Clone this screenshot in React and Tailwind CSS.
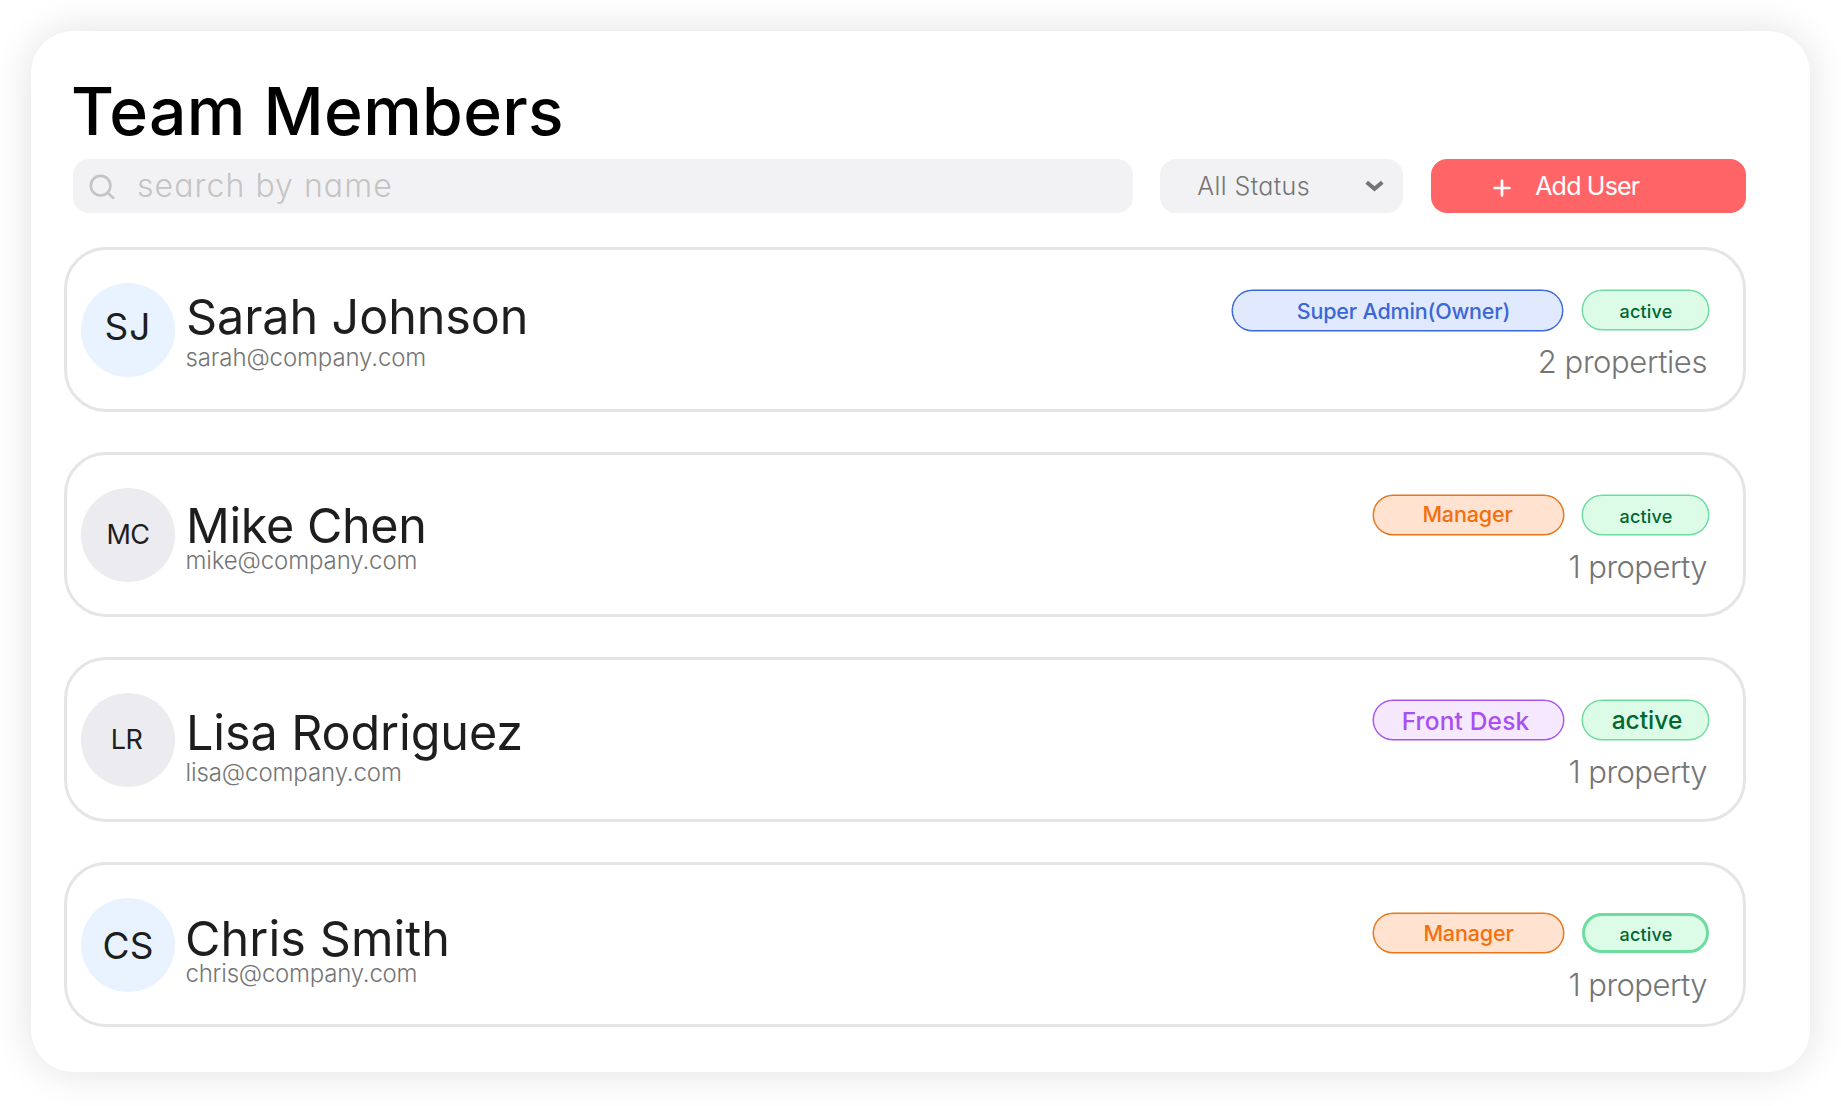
const managerPill = "w-[191px] h-[40px] border-[#e8751a] shadow-[0_0_0_0.5px_#e8751a] bg-[#ffe2cf] text-[#f2700d] text-[21.5px] tracking-[-0.15px]";
const activePill = "border-[1px] shadow-[0_0_0_0.5px_#6ddc9f]";

const members = [
  {
    initials: "SJ", avatar: "bg-[#e9f3ff] text-[37px] tracking-[1px]", initialsBox: "-mt-[6px]",
    name: "Sarah Johnson", nameBox: "mt-[43px] tracking-[-0.1px]",
    email: "sarah@company.com", emailBox: "mt-[6px] tracking-[-0.12px]",
    role: "Super Admin(Owner)", roleBox: "mr-px w-[331px] h-[41px] border-[#3b67d6] shadow-[0_0_0_0.5px_#3b67d6] bg-[#e0e9fe] text-[#3b67d6] text-[21.5px] tracking-[-0.18px]", roleText: "translate-x-[6px] translate-y-px",
    status: activePill, statusText: "text-[18px] tracking-[0.2px] mt-[4px] ml-px",
    badges: "mt-[40px]", properties: "2 properties", propertiesText: "mt-[12px] tracking-[-0.4px]",
  },
  {
    initials: "MC", avatar: "bg-[#ebebf0] text-[27px] tracking-[-0.6px]", initialsBox: "-mt-px",
    name: "Mike Chen", nameBox: "mt-[47px] tracking-[-0.4px]",
    email: "mike@company.com", emailBox: "tracking-[-0.12px]",
    role: "Manager", roleBox: managerPill, roleText: "-translate-x-px",
    status: activePill, statusText: "text-[18px] tracking-[0.2px] mt-[4px] ml-px",
    badges: "mt-[40px]", properties: "1 property", propertiesText: "mt-[13px] tracking-[-0.55px]",
  },
  {
    initials: "LR", avatar: "bg-[#ebebf0] text-[27px] tracking-[-0.6px]", initialsBox: "-mt-px -ml-[3px]",
    name: "Lisa Rodriguez", nameBox: "mt-[49px] tracking-[-0.1px]",
    email: "lisa@company.com", emailBox: "mt-[5px] tracking-[-0.1px]",
    role: "Front Desk", roleBox: "w-[191px] h-[40px] border-[#a855f0] shadow-[0_0_0_0.5px_#a855f0] bg-[#f5e8ff] text-[#a94ff0] text-[24.5px] tracking-[0.15px]", roleText: "-translate-x-[3px] translate-y-px",
    status: activePill, statusText: "text-[24.5px] mt-px ml-[3px]",
    badges: "mt-[40px]", properties: "1 property", propertiesText: "mt-[13px] tracking-[-0.55px]",
  },
  {
    initials: "CS", avatar: "bg-[#e9f3ff] text-[37px]", initialsBox: "mt-px",
    name: "Chris Smith", nameBox: "mt-[50px] -ml-px tracking-[0.1px]",
    email: "chris@company.com", emailBox: "tracking-[-0.22px]",
    role: "Manager", roleBox: managerPill, roleText: "translate-y-px",
    status: "border-[3px]", statusText: "text-[18px] tracking-[0.2px] mt-[4px] ml-px",
    badges: "mt-[48px]", properties: "1 property", propertiesText: "mt-[13px] tracking-[-0.55px]",
  },
];

function MemberRow({ m }) {
  return (
    <li className="flex h-[165px] items-start rounded-[42px] border-[3px] border-[#e5e5e5] pl-[14px] pr-[34px]">
      <div className={`mt-[32.5px] flex size-[94px] shrink-0 items-center justify-center rounded-full leading-none text-[#1e1e1e] ${m.avatar}`}>
        <span className={m.initialsBox}>{m.initials}</span>
      </div>
      <div className="ml-[10px] flex flex-col">
        <h2 className={`pl-px text-[48.5px] leading-[48px] text-[#1e1e1e] ${m.nameBox}`}>{m.name}</h2>
        <p className={`pl-[0.5px] text-[24px] font-light leading-[22px] text-[#757575] ${m.emailBox}`}>{m.email}</p>
      </div>
      <div className="ml-auto flex flex-col items-end">
        <div className={`flex gap-[18px] font-medium leading-none ${m.badges}`}>
          <span className={`flex items-center justify-center rounded-full border ${m.roleBox}`}>
            <span className={m.roleText}>{m.role}</span>
          </span>
          <span className={`flex h-[40px] w-[127px] items-center justify-center rounded-full border-[#6ddc9f] bg-[#dcfce7] text-[#016630] ${m.status}`}>
            <span className={m.statusText}>active</span>
          </span>
        </div>
        <p className={`pr-[2px] text-[31px] font-light leading-[38px] text-[#757575] ${m.propertiesText}`}>{m.properties}</p>
      </div>
    </li>
  );
}

export default function App() {
  return (
    <div className="h-[1106px] w-[1841px] overflow-hidden bg-white p-[31px] font-['Inter',sans-serif]">
      <main className="h-[1041px] w-[1779px] rounded-[42px] bg-white pl-[33px] pr-[64px] pt-[40px] shadow-[0_0_40px_rgba(0,0,0,0.12)]">
        <h1 className="pl-[7px] text-[66px] font-medium leading-[80px] tracking-[0.3px] text-black">Team Members</h1>
        <div className="mt-[8px] flex h-[54px] items-stretch pl-[9px]">
          <label className="flex w-[1061px] items-center rounded-[16px] bg-[#f2f2f4] pl-[16px]">
            <svg viewBox="0 0 26 26" className="size-[26px] text-[#c4c4c4]" fill="none" stroke="currentColor" strokeWidth="2.6" strokeLinecap="round">
              <circle cx="11.6" cy="12.7" r="9.8" />
              <path d="M18.700 19.800 24.200 25" />
            </svg>
            <span className="ml-[22px] text-[32px] font-light tracking-[1.05px] text-[#c4c4c4] [font-feature-settings:'cv11']">search by name</span>
          </label>
          <div className="ml-[27px] flex w-[243px] items-center justify-between rounded-[16px] bg-[#f2f2f4] pl-[37px] pr-[19px] text-[25px] font-light tracking-[0.4px] text-[#757575] [font-feature-settings:'cv11']">
            <span className="pt-[2px]">All Status</span>
            <svg viewBox="0 0 20 12" className="h-[12px] w-[19px]" fill="none" stroke="currentColor" strokeWidth="4.2">
              <path d="M1.800 2 10 9 18.200 2" />
            </svg>
          </div>
          <button className="ml-[28px] flex w-[315px] items-center rounded-[16px] bg-[#ff6467] pl-[62px] text-[25px] tracking-[-0.8px] text-white">
            <svg viewBox="0 0 18 18" className="mt-[3px] size-[18px]" fill="none" stroke="currentColor" strokeWidth="2.7" strokeLinecap="round">
              <path d="M9 1.500V16.500M1.500 9H16.500" />
            </svg>
            <span className="ml-[24px] pt-[2px]">Add User</span>
          </button>
        </div>
        <ul className="mt-[34px] flex flex-col gap-[40px]">
          {members.map((m) => <MemberRow key={m.name} m={m} />)}
        </ul>
      </main>
    </div>
  );
}
